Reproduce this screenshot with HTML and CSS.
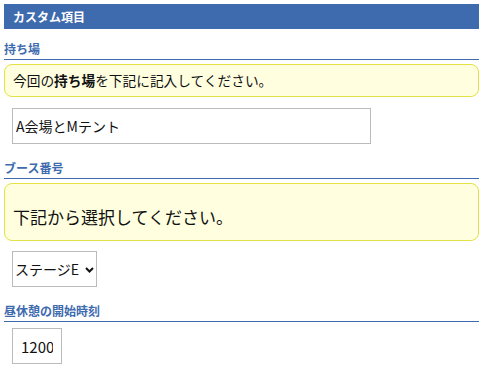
FILE: index.html
```html
<!DOCTYPE html>
<html lang="ja">
<head>
    <meta charset="UTF-8">
    <meta name="viewport" content="width=device-width, initial-scale=1.0">
    <title>カスタム項目</title>
    <link rel="stylesheet" href="styles.css">
</head>
<body>
    <div class="custom-fields">
        <div class="block-title">カスタム項目</div>

        <div class="field">
            <div class="field-label first">持ち場</div>
            <div class="note">今回の<b>持ち場</b>を下記に記入してください。</div>
            <input type="text" class="text-input place" value="A会場とMテント">
        </div>

        <div class="field">
            <div class="field-label">ブース番号</div>
            <div class="note large">下記から選択してください。</div>
            <span class="select-wrap">
                <select class="booth-select">
                    <option>ステージA</option>
                    <option>ステージB</option>
                    <option>ステージC</option>
                    <option>ステージD</option>
                    <option selected>ステージE</option>
                </select>
                <svg class="chevron" width="9" height="6" viewBox="0 0 9 6">
                    <polyline points="1,1 4.5,4.5 8,1" fill="none" stroke="#111" stroke-width="2"/>
                </svg>
            </span>
        </div>

        <div class="field">
            <div class="field-label">昼休憩の開始時刻</div>
            <input type="text" class="text-input time" value="1200">
        </div>
    </div>
</body>
</html>
```

FILE: styles.css
```css
body {
    margin: 0;
    font-family: "Noto Sans CJK JP", "Noto Sans", sans-serif;
    color: #111;
    background-color: #fff;
}
.custom-fields {
    width: 475px;
    margin: 4px 0 0 4px;
}
.block-title {
    height: 25px;
    line-height: 25px;
    padding-left: 9px;
    background-color: #3e6aae;
    color: #fff;
    font-size: 12px;
    font-weight: bold;
}
.field-label {
    margin-top: 15px;
    padding-bottom: 1px;
    border-bottom: 1px solid #3e6aae;
    color: #3e6aae;
    font-size: 12px;
    font-weight: bold;
    line-height: 18px;
}
.field-label.first {
    margin-top: 11px;
}
.note {
    margin-top: 4px;
    padding: 6px 8px;
    background-color: #ffffe0;
    border: 1px solid #e4e244;
    border-radius: 8px;
    font-size: 13.7px;
    line-height: 19px;
}
.note b {
    font-weight: bold;
}
.note.large {
    padding: 21px 8px 11px;
    font-size: 17px;
    line-height: 24px;
}
.text-input {
    display: block;
    box-sizing: border-box;
    height: 36px;
    margin: 11px 0 0 8px;
    padding: 7px 3px;
    border: 1px solid #bbb;
    border-radius: 0;
    font-family: inherit;
    font-size: 14px;
    line-height: 20px;
    color: #111;
    outline: none;
}
.text-input.place {
    width: 359px;
}
.text-input.time {
    width: 50px;
    margin-top: 6px;
    padding: 7px 8px;
    font-size: 15px;
}
.select-wrap {
    position: relative;
    display: inline-block;
    margin: 10px 0 0 8px;
}
.booth-select {
    display: block;
    box-sizing: border-box;
    width: 85px;
    height: 36px;
    padding: 0 0 0 2px;
    border: 1px solid #bbb;
    border-radius: 0;
    background-color: #fff;
    font-family: inherit;
    font-size: 14px;
    color: #111;
    appearance: none;
    -webkit-appearance: none;
}
.chevron {
    position: absolute;
    top: 16px;
    left: 73px;
    pointer-events: none;
}
```
